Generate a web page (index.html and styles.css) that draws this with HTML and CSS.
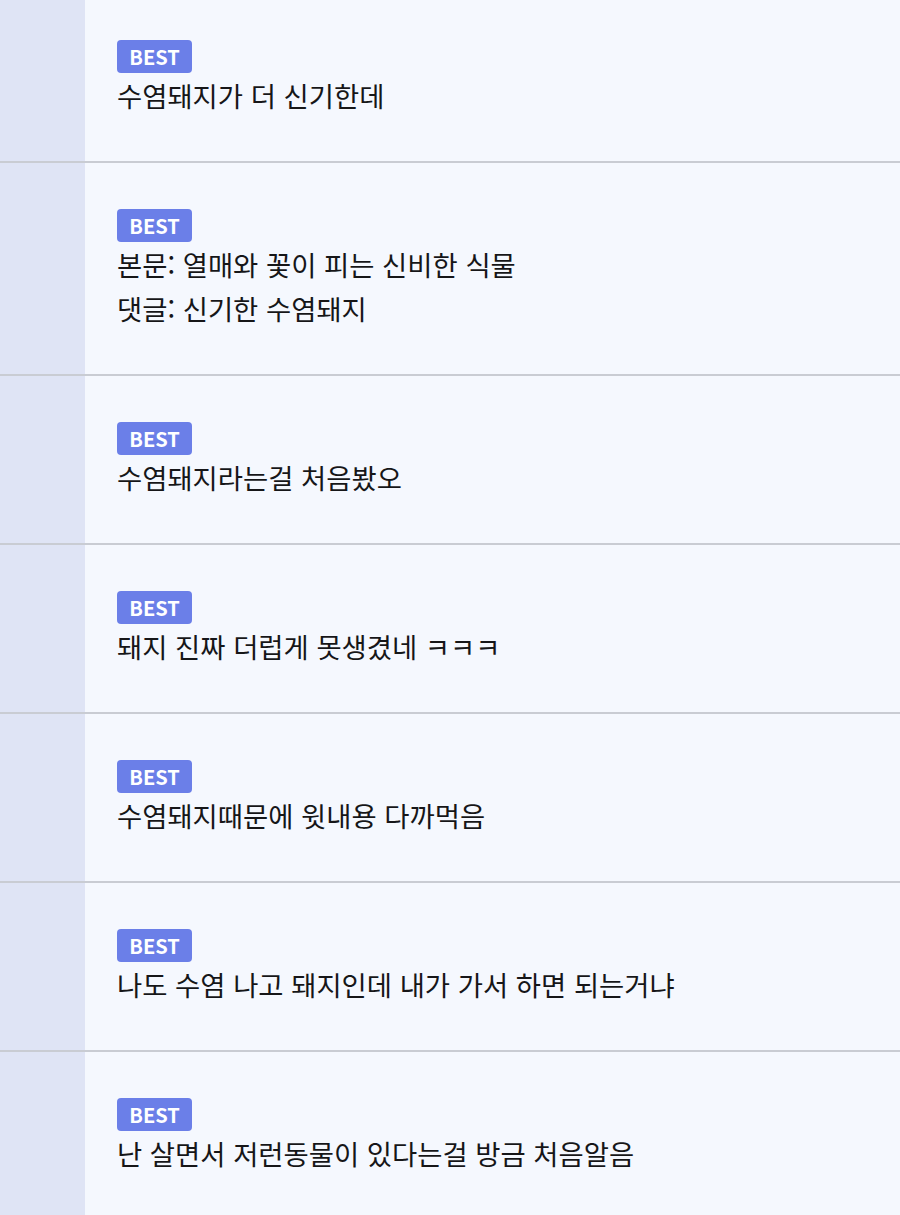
FILE: index.html
```html
<!DOCTYPE html>
<html lang="ko">
<head>
<meta charset="utf-8">
<title>BEST 댓글</title>
<link rel="stylesheet" href="styles.css">
</head>
<body>
<div class="list">
  <div class="row row-first">
    <div class="side"></div>
    <div class="body">
      <span class="badge">BEST</span>
      <p class="line">수염돼지가 더 신기한데</p>
    </div>
  </div>
  <div class="row">
    <div class="side"></div>
    <div class="body">
      <span class="badge">BEST</span>
      <p class="line">본문: 열매와 꽃이 피는 신비한 식물</p>
      <p class="line">댓글: 신기한 수염돼지</p>
    </div>
  </div>
  <div class="row">
    <div class="side"></div>
    <div class="body">
      <span class="badge">BEST</span>
      <p class="line">수염돼지라는걸 처음봤오</p>
    </div>
  </div>
  <div class="row">
    <div class="side"></div>
    <div class="body">
      <span class="badge">BEST</span>
      <p class="line">돼지 진짜 더럽게 못생겼네 ㅋㅋㅋ</p>
    </div>
  </div>
  <div class="row">
    <div class="side"></div>
    <div class="body">
      <span class="badge">BEST</span>
      <p class="line">수염돼지때문에 윗내용 다까먹음</p>
    </div>
  </div>
  <div class="row">
    <div class="side"></div>
    <div class="body">
      <span class="badge">BEST</span>
      <p class="line">나도 수염 나고 돼지인데 내가 가서 하면 되는거냐</p>
    </div>
  </div>
  <div class="row">
    <div class="side"></div>
    <div class="body">
      <span class="badge">BEST</span>
      <p class="line">난 살면서 저런동물이 있다는걸 방금 처음알음</p>
    </div>
  </div>
</div>
</body>
</html>
```
FILE: styles.css
```css
html, body {
  margin: 0;
  padding: 0;
  background: #f5f8fe;
}
body {
  font-family: "Noto Sans CJK KR", "Noto Sans", sans-serif;
  color: #161618;
}
.list {
  display: flex;
  flex-direction: column;
}
.row {
  display: flex;
  border-bottom: 2px solid #c9ccd3;
}
.side {
  width: 85px;
  flex: none;
  background: #dfe4f5;
}
.body {
  flex: 1;
  padding: 46px 20px 44px 32px;
  display: flex;
  flex-direction: column;
  align-items: flex-start;
}
.row-first .body {
  padding-top: 40px;
}
.badge {
  display: flex;
  align-items: center;
  justify-content: center;
  width: 75px;
  height: 33px;
  border-radius: 4px;
  background: #6b7fe8;
  color: #ffffff;
  font-family: "Noto Sans CJK KR", "Noto Sans", sans-serif;
  font-weight: 600;
  font-size: 20px;
  line-height: 1;
}
.line {
  margin: 0;
  font-size: 27.4px;
  line-height: 44px;
  white-space: nowrap;
}
```
